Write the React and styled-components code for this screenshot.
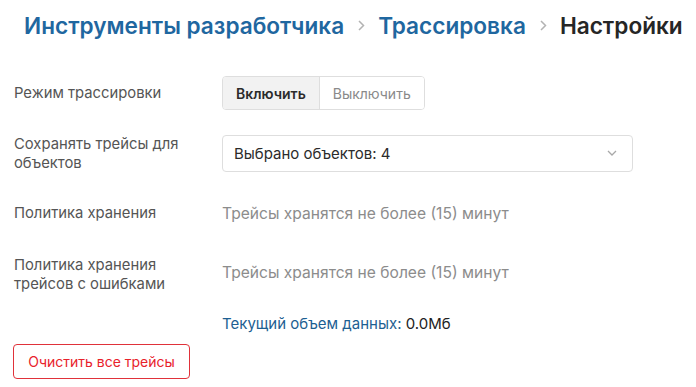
import React, { useState } from "react";
import styled, { createGlobalStyle } from "styled-components";

const GlobalStyle = createGlobalStyle`
  body {
    margin: 0;
    background: #fff;
    font-family: Inter, "Noto Sans", sans-serif;
  }
`;

function Chevron() {
  return (
    <svg width="10" height="14" viewBox="0 0 10 14">
      <path d="M3 3l4.5 4.5L3 12" fill="none" stroke="#b3b3b3" strokeWidth="1.5" />
    </svg>
  );
}

function App() {
  const [mode, setMode] = useState("on");

  return (
    <Page>
      <GlobalStyle />
      <Crumbs>
        <Crumb link>Инструменты разработчика</Crumb>
        <Chevron />
        <Crumb link>Трассировка</Crumb>
        <Chevron />
        <Crumb>Настройки</Crumb>
      </Crumbs>

      <Form>
        <Row top={37} h={34}>
          <Label>Режим трассировки</Label>
          <Toggle>
            <ToggleBtn active={mode === "on"} onClick={() => setMode("on")}>
              Включить
            </ToggleBtn>
            <ToggleBtn active={mode === "off"} onClick={() => setMode("off")}>
              Выключить
            </ToggleBtn>
          </Toggle>
        </Row>

        <Row top={24} h={37}>
          <Label shift={1}>Сохранять трейсы для объектов</Label>
          <Select>
            <span>Выбрано объектов: 4</span>
            <svg width="12" height="8" viewBox="0 0 12 8">
              <path d="M2 2l4 4 4-4" fill="none" stroke="#a8a8a8" strokeWidth="1.3" />
            </svg>
          </Select>
        </Row>

        <Row top={31} h={20}>
          <Label>Политика хранения</Label>
          <Value>Трейсы хранятся не более (15) минут</Value>
        </Row>

        <Row top={32} h={40}>
          <Label>Политика хранения трейсов с ошибками</Label>
          <Value shift={-3}>Трейсы хранятся не более (15) минут</Value>
        </Row>

        <Row top={18} h={20}>
          <span />
          <Usage>
            Текущий объем данных: <b>0.0Мб</b>
          </Usage>
        </Row>
      </Form>

      <DangerButton>Очистить все трейсы</DangerButton>
    </Page>
  );
}

const Page = styled.div`
  width: 696px;
  height: 387px;
  padding: 11px 0 0 14px;
  box-sizing: border-box;
  overflow: hidden;
`;

const Crumbs = styled.div`
  display: flex;
  align-items: center;
  gap: 3px;
  padding-left: 10px;
  height: 28px;
`;

const Crumb = styled.span`
  font-size: 22.6px;
  font-weight: 600;
  color: ${(p) => (p.link ? "#1f67a0" : "#262626")};
  margin: 0 9px;
  white-space: nowrap;
  &:first-child {
    margin-left: 0;
  }
`;

const Form = styled.div`
  display: flex;
  flex-direction: column;
  width: 620px;
`;

const Row = styled.div`
  display: grid;
  grid-template-columns: 208px 1fr;
  align-items: center;
  margin-top: ${(p) => p.top}px;
  min-height: ${(p) => p.h}px;
`;

const Label = styled.div`
  font-size: 14.8px;
  line-height: 19px;
  color: #555;
  width: 185px;
  transform: translateY(${(p) => p.shift || 0}px);
`;

const Toggle = styled.div`
  display: inline-flex;
  justify-self: start;
  border: 1px solid #dedede;
  border-radius: 4px;
  overflow: hidden;
  height: 34px;
  box-sizing: border-box;
`;

const ToggleBtn = styled.button`
  font-family: inherit;
  font-size: 14px;
  border: 0;
  padding: 0 13px;
  background: ${(p) => (p.active ? "#f2f2f2" : "#fff")};
  color: ${(p) => (p.active ? "#2b2b2b" : "#8a8a8a")};
  font-weight: ${(p) => (p.active ? 600 : 400)};
  cursor: pointer;
  & + & {
    border-left: 1px solid #dedede;
  }
`;

const Select = styled.div`
  display: flex;
  align-items: center;
  justify-content: space-between;
  width: 411px;
  height: 37px;
  box-sizing: border-box;
  border: 1px solid #dedede;
  border-radius: 4px;
  padding: 0 14px 0 11px;
  font-size: 15px;
  color: #2b2b2b;
`;

const Value = styled.div`
  font-size: 15.6px;
  color: #8c8c8c;
  white-space: nowrap;
  transform: translateY(${(p) => p.shift || 0}px);
`;

const Usage = styled.div`
  font-size: 15px;
  color: #1d5f92;
  b {
    font-weight: 400;
    color: #222;
  }
`;

const DangerButton = styled.button`
  display: block;
  margin-top: 11px;
  margin-left: -1px;
  width: 177px;
  height: 35px;
  border: 1px solid #e0323a;
  border-radius: 4px;
  background: #fff;
  color: #e8222b;
  font-family: inherit;
  font-size: 14px;
  cursor: pointer;
`;

export default App;
